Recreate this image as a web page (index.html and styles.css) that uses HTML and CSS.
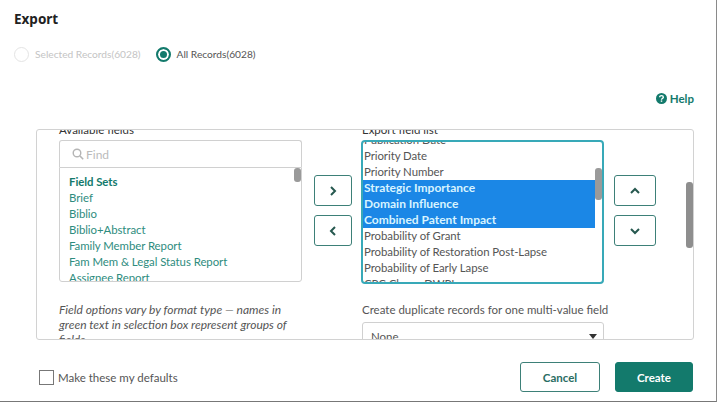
FILE: index.html
```html
<!DOCTYPE html>
<html lang="en">
<head>
<meta charset="utf-8">
<title>Export</title>
<link rel="stylesheet" href="styles.css">
</head>
<body>
<div class="dialog">
  <h1 class="title">Export</h1>
  <div class="radios">
    <label class="radio disabled"><span class="dot"></span>Selected Records(6028)</label>
    <label class="radio"><span class="dot on"></span>All Records(6028)</label>
  </div>
  <div class="help-row">
    <a class="help"><svg width="11" height="11" viewBox="0 0 12 12"><circle cx="6" cy="6" r="6" fill="#137a6c"/><path d="M4 4.6C4 3.4 4.9 2.8 6 2.8s2 .7 2 1.7c0 1.5-2 1.4-2 2.8" fill="none" stroke="#fff" stroke-width="1.5"/><rect x="5.2" y="8.1" width="1.6" height="1.5" fill="#fff"/></svg>Help</a>
  </div>
  <div class="panel">
    <div class="panel-scroll">
      <div class="columns">
        <div class="col">
          <div class="label">Available fields</div>
          <div class="find"><svg width="12" height="12" viewBox="0 0 12 12"><circle cx="5" cy="5" r="3.8" fill="none" stroke="#b5b5b5" stroke-width="1.4"/><path d="M8 8l3.2 3.2" stroke="#b5b5b5" stroke-width="1.6"/></svg>Find</div>
          <div class="list avail">
            <div class="item head">Field Sets</div>
            <div class="item">Brief</div>
            <div class="item">Biblio</div>
            <div class="item">Biblio+Abstract</div>
            <div class="item">Family Member Report</div>
            <div class="item">Fam Mem &amp; Legal Status Report</div>
            <div class="item">Assignee Report</div>
            <span class="thumb thumb-a"></span>
          </div>
          <p class="note">Field options vary by format type — names in green text in selection box represent groups of fields</p>
        </div>
        <div class="btns">
          <button class="arrow"><svg width="8" height="10" viewBox="0 0 8 10"><path d="M2 1l4 4-4 4" fill="none" stroke="#26584f" stroke-width="2"/></svg></button>
          <button class="arrow"><svg width="8" height="10" viewBox="0 0 8 10"><path d="M6 1L2 5l4 4" fill="none" stroke="#26584f" stroke-width="2"/></svg></button>
        </div>
        <div class="col col-r">
          <div class="label">Export field list</div>
          <div class="list export">
            <div class="rows">
              <div class="row">Publication Date</div>
              <div class="row">Priority Date</div>
              <div class="row">Priority Number</div>
              <div class="row sel">Strategic Importance</div>
              <div class="row sel">Domain Influence</div>
              <div class="row sel">Combined Patent Impact</div>
              <div class="row">Probability of Grant</div>
              <div class="row">Probability of Restoration Post-Lapse</div>
              <div class="row">Probability of Early Lapse</div>
              <div class="row">CPC Class - DWPI</div>
            </div>
            <span class="thumb thumb-e"></span>
          </div>
          <div class="dup-label">Create duplicate records for one multi-value field</div>
          <div class="select">None<span class="caret"></span></div>
        </div>
        <div class="btns btns-r">
          <button class="arrow"><svg width="10" height="8" viewBox="0 0 10 8"><path d="M1 6l4-4 4 4" fill="none" stroke="#26584f" stroke-width="2"/></svg></button>
          <button class="arrow"><svg width="10" height="8" viewBox="0 0 10 8"><path d="M1 2l4 4 4-4" fill="none" stroke="#26584f" stroke-width="2"/></svg></button>
        </div>
      </div>
    </div>
    <span class="panel-thumb"></span>
  </div>
  <div class="footer">
    <label class="check"><span class="box"></span>Make these my defaults</label>
    <div class="actions">
      <button class="btn cancel">Cancel</button>
      <button class="btn create">Create</button>
    </div>
  </div>
</div>
</body>
</html>
```
FILE: styles.css
```css
* { box-sizing: border-box; }
html, body { margin: 0; padding: 0; background: #fff; }
body { font-family: Lato, "Noto Sans", sans-serif; color: #555; overflow: hidden; }
.dialog { width: 717px; height: 402px; border-right: 1px solid #8a8a8a; border-bottom: 1px solid #777; background: #fff; display: flex; flex-direction: column; }
.title { margin: 0; padding: 10px 0 0 14px; font-size: 13.5px; line-height: 19px; font-weight: 700; color: #222; font-family: "Noto Sans", sans-serif; }
.radios { display: flex; gap: 15px; padding: 17px 0 0 14px; height: 44px; }
.radio { display: flex; align-items: center; height: 16px; font-size: 10.2px; color: #555; gap: 6px; }
.radio.disabled { color: #c4c4c4; }
.dot { width: 15px; height: 15px; border-radius: 50%; border: 1.5px solid #e4e4e4; background: #fff; display: block; flex: none; }
.dot.on { border: 2px solid #137a6c; box-shadow: inset 0 0 0 2px #fff; background: #137a6c; }
.help-row { display: flex; justify-content: flex-end; padding: 12px 22px 0 0; height: 56px; }
.help { display: flex; align-items: center; gap: 3px; height: 20px; font-size: 11.5px; font-weight: 700; color: #137a6c; margin-top: 3px; }
.panel { position: relative; margin-left: 36px; width: 658px; height: 211px; border: 1px solid #d2d2d2; border-radius: 3px; overflow: hidden; flex: none; }
.panel-scroll { margin-top: -8px; padding-left: 22px; }
.columns { display: flex; }
.col { width: 243px; flex: none; }
.label { font-size: 11.5px; line-height: 16px; height: 18px; color: #333; }
.find { display: flex; align-items: center; gap: 2px; height: 27px; padding-left: 12px; border: 1px solid #d0d0d0; border-bottom: 0; border-radius: 3px 3px 0 0; font-size: 12px; color: #bbb; }
.list { position: relative; overflow: hidden; }
.avail { height: 115px; border: 1px solid #d0d0d0; border-radius: 0 0 3px 3px; padding: 6px 0 0 9px; }
.item { font-size: 11.4px; letter-spacing: -.05px; line-height: 16px; color: #2e8c7e; white-space: nowrap; }
.item.head { font-weight: 700; color: #137a6c; }
.thumb { position: absolute; background: #9a9a9a; border-radius: 3px; width: 7px; }
.thumb-a { right: 0; top: 0; height: 14px; }
.note { margin: 20px 0 0; max-width: 236px; font-size: 12px; line-height: 15px; font-style: italic; color: #555; }
.btns { width: 60px; flex: none; padding: 53px 0 0 12px; display: flex; flex-direction: column; gap: 9px; }
.btns-r { padding-left: 10px; }
.arrow { display: flex; align-items: center; justify-content: center; width: 38px; height: 31px; padding: 0; background: #fff; border: 1px solid #3d8078; border-radius: 3px; }
.btns-r .arrow { width: 42px; }
.col-r { margin-left: -1px; width: 243px; }
.col-r .label { padding-left: 1px; }
.export { height: 144px; border: 2px solid #38a9b8; border-radius: 4px; }
.rows { margin-top: -10px; }
.row { font-size: 11.4px; letter-spacing: -.05px; line-height: 16px; height: 16px; padding-left: 1px; width: 232px; color: #555; white-space: nowrap; }
.row.sel { background: #1b87e6; color: #d8f4ff; font-size: 12px; letter-spacing: 0; font-weight: 700; }
.thumb-e { right: 0; top: 26px; height: 32px; }
.dup-label { margin-top: 18px; padding-left: 1px; font-size: 11.5px; line-height: 16px; white-space: nowrap; color: #555; }
.select { position: relative; margin: 4px 0 0 1px; height: 30px; border: 1px solid #d0d0d0; border-radius: 3px; padding: 6px 0 0 8px; font-size: 11.5px; line-height: 16px; }
.caret { position: absolute; right: 6px; top: 11px; border: 4px solid transparent; border-top: 5px solid #333; border-bottom: 0; }
.panel-thumb { position: absolute; right: 0; top: 52px; width: 7px; height: 66px; background: #8e8e8e; border-radius: 3px; }
.footer { display: flex; justify-content: space-between; align-items: center; padding: 22px 23px 0 39px; }
.check { display: flex; align-items: center; gap: 4px; font-size: 11.5px; color: #555; }
.box { width: 15px; height: 15px; border: 1px solid #777; display: block; }
.actions { display: flex; gap: 15px; }
.btn { height: 30px; border-radius: 3px; font: 700 11.5px Lato, sans-serif; padding: 0; }
.cancel { width: 80px; background: #fff; border: 1px solid #3d8078; color: #2a6d63; }
.create { width: 78px; background: #137a6c; border: 1px solid #137a6c; color: #fff; }
```
